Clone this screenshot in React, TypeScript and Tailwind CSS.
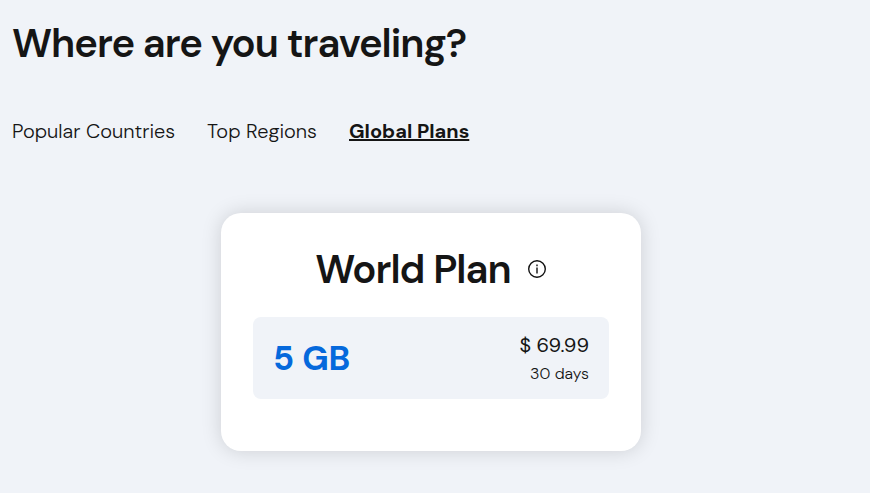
const TABS = ['Popular Countries', 'Top Regions', 'Global Plans'];

const PLANS = [{ data: '5 GB', price: '$ 69.99', duration: '30 days' }];

function InfoIcon() {
  return (
    <svg width="20" height="20" viewBox="0 0 20 20" fill="none" aria-hidden="true">
      <circle cx="10" cy="10" r="8.3" stroke="#121212" strokeWidth="1.4" />
      <path d="M10 5.6v1.6M10 8.6v5.8" stroke="#121212" strokeWidth="1.4" />
    </svg>
  );
}

export default function App() {
  return (
    <main className="min-h-screen bg-[#f0f3f8] pt-5 pr-5 pb-10 pl-3 font-['DM_Sans','Open_Sans',sans-serif] text-[#151515]">
      <h1 className="text-[40px] leading-[46px] font-semibold tracking-tight">Where are you traveling?</h1>

      <nav className="mt-[49px] flex gap-8 text-xl leading-8 font-light">
        {TABS.map((tab) => (
          <a
            key={tab}
            href="#"
            className={tab === 'Global Plans' ? 'font-bold underline' : ''}
          >
            {tab}
          </a>
        ))}
      </nav>

      <section className="mx-auto mt-[66px] w-full max-w-[420px] rounded-[20px] bg-white px-8 pt-8 pb-13 shadow-[0_0_20px_rgba(0,0,0,0.15)]">
        <div className="flex items-center justify-center gap-4">
          <h2 className="text-[40px] leading-12 font-semibold tracking-tight">World Plan</h2>
          <button type="button" aria-label="Plan details">
            <InfoIcon />
          </button>
        </div>

        {PLANS.map((plan) => (
          <button
            key={plan.data}
            type="button"
            className="mt-6 flex w-full items-center justify-between rounded-lg bg-[#f0f3f8] px-5 py-3"
          >
            <span className="text-[34px] font-bold text-[#0569dc]">{plan.data}</span>
            <span className="text-right">
              <span className="block text-xl leading-8">{plan.price}</span>
              <span className="block text-base leading-[26px] font-light">{plan.duration}</span>
            </span>
          </button>
        ))}
      </section>
    </main>
  );
}
